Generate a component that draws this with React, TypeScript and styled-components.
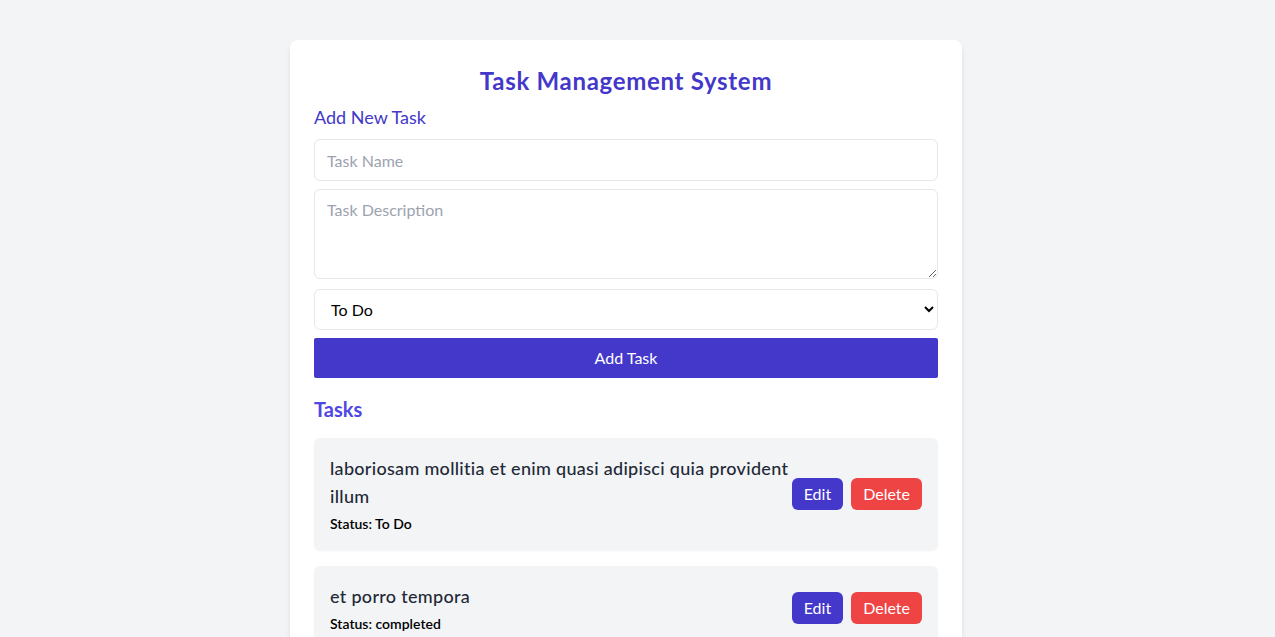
import React, { useState } from 'react';
import styled, { createGlobalStyle } from 'styled-components';

interface Task {
  id: number;
  title: string;
  status: string;
}

const initialTasks: Task[] = [
  { id: 1, title: 'laboriosam mollitia et enim quasi adipisci quia provident illum', status: 'To Do' },
  { id: 2, title: 'et porro tempora', status: 'completed' },
];

const App = () => {
  const [tasks] = useState<Task[]>(initialTasks);

  return (
    <>
      <GlobalStyle />
      <Page>
        <Card>
          <Heading>Task Management System</Heading>
          <SubHeading>Add New Task</SubHeading>
          <Form onSubmit={e => e.preventDefault()}>
            <TextInput type="text" placeholder="Task Name" />
            <TextArea placeholder="Task Description" rows={3} />
            <Select defaultValue="To Do">
              <option value="To Do">To Do</option>
              <option value="In Progress">In Progress</option>
              <option value="completed">completed</option>
            </Select>
            <SubmitButton type="submit">Add Task</SubmitButton>
          </Form>
          <ListTitle>Tasks</ListTitle>
          <TaskList>
            {tasks.map(task => (
              <TaskCard key={task.id}>
                <TaskInfo>
                  <TaskTitle>{task.title}</TaskTitle>
                  <TaskStatus>Status: {task.status}</TaskStatus>
                </TaskInfo>
                <Actions>
                  <ActionButton $variant="edit">Edit</ActionButton>
                  <ActionButton $variant="delete">Delete</ActionButton>
                </Actions>
              </TaskCard>
            ))}
          </TaskList>
        </Card>
      </Page>
    </>
  );
};

const GlobalStyle = createGlobalStyle`
  * {
    box-sizing: border-box;
  }
  body {
    margin: 0;
    background: #f3f4f6;
    font-family: "Segoe UI", Lato, "Liberation Sans", sans-serif;
    color: #1f2937;
  }
`;

// leaves room on the right like the scrollbar in the original page
const Page = styled.div`
  padding: 40px 23px 0 0;
`;

const Card = styled.div`
  max-width: 672px;
  margin: 0 auto;
  background: #fff;
  border-radius: 8px;
  padding: 24px;
  box-shadow: 0 4px 6px -1px rgba(0, 0, 0, 0.1), 0 2px 4px -2px rgba(0, 0, 0, 0.1);
`;

const Heading = styled.h1`
  margin: 0 0 6px;
  padding-top: 1px;
  font-size: 24px;
  line-height: 32px;
  font-weight: 700;
  letter-spacing: 0.7px;
  text-align: center;
  color: #4338ca;
`;

const SubHeading = styled.h2`
  margin: 0 0 8px;
  font-size: 18px;
  line-height: 28px;
  font-weight: 400;
  color: #4338ca;
`;

const Form = styled.form`
  display: flex;
  flex-direction: column;
  gap: 8px;
`;

const fieldBase = `
  width: 100%;
  font-family: inherit;
  font-size: 16px;
  line-height: 24px;
  border: 1px solid #e5e7eb;
  border-radius: 6px;
  background: #fff;
  color: #000;
  outline: none;

  &::placeholder {
    color: #9ca3af;
  }
`;

const TextInput = styled.input`
  ${fieldBase}
  height: 42px;
  padding: 8px 12px;
`;

const TextArea = styled.textarea`
  ${fieldBase}
  display: block;
  height: 90px;
  padding: 8px 12px;
  margin-bottom: 2px;
`;

const Select = styled.select`
  ${fieldBase}
  height: 41px;
  padding: 8px 10px 8px 12px;
`;

const SubmitButton = styled.button`
  width: 100%;
  height: 40px;
  border: none;
  border-radius: 2px;
  background: #4338ca;
  color: #fff;
  font-family: inherit;
  font-size: 16px;
  line-height: 24px;
  cursor: pointer;
`;

const ListTitle = styled.h2`
  margin: 17px 0 15px;
  font-size: 20px;
  line-height: 28px;
  font-weight: 700;
  color: #4f46e5;
`;

const TaskList = styled.div`
  display: flex;
  flex-direction: column;
  gap: 16px;
`;

const TaskCard = styled.div`
  display: flex;
  align-items: center;
  justify-content: space-between;
  padding: 16px;
  background: #f3f4f6;
  border-radius: 6px;
  box-shadow: 0 1px 2px 0 rgba(0, 0, 0, 0.05);
`;

const TaskInfo = styled.div`
  min-width: 0;
`;

const TaskTitle = styled.h3`
  margin: 0;
  font-size: 18px;
  line-height: 28px;
  font-weight: 500;
  letter-spacing: 0.3px;
  color: #1f2937;
`;

const TaskStatus = styled.p`
  margin: 4px 0 0;
  font-size: 14px;
  line-height: 20px;
  font-weight: 600;
  color: #000;
`;

const Actions = styled.div`
  display: flex;
  gap: 8px;
  flex-shrink: 0;
`;

const ActionButton = styled.button<{ $variant: 'edit' | 'delete' }>`
  padding: 4px 12px;
  border: none;
  border-radius: 6px;
  background: ${props => (props.$variant === 'edit' ? '#4338ca' : '#ef4444')};
  color: #fff;
  font-family: inherit;
  font-size: 16px;
  line-height: 24px;
  cursor: pointer;
`;

export default App;
